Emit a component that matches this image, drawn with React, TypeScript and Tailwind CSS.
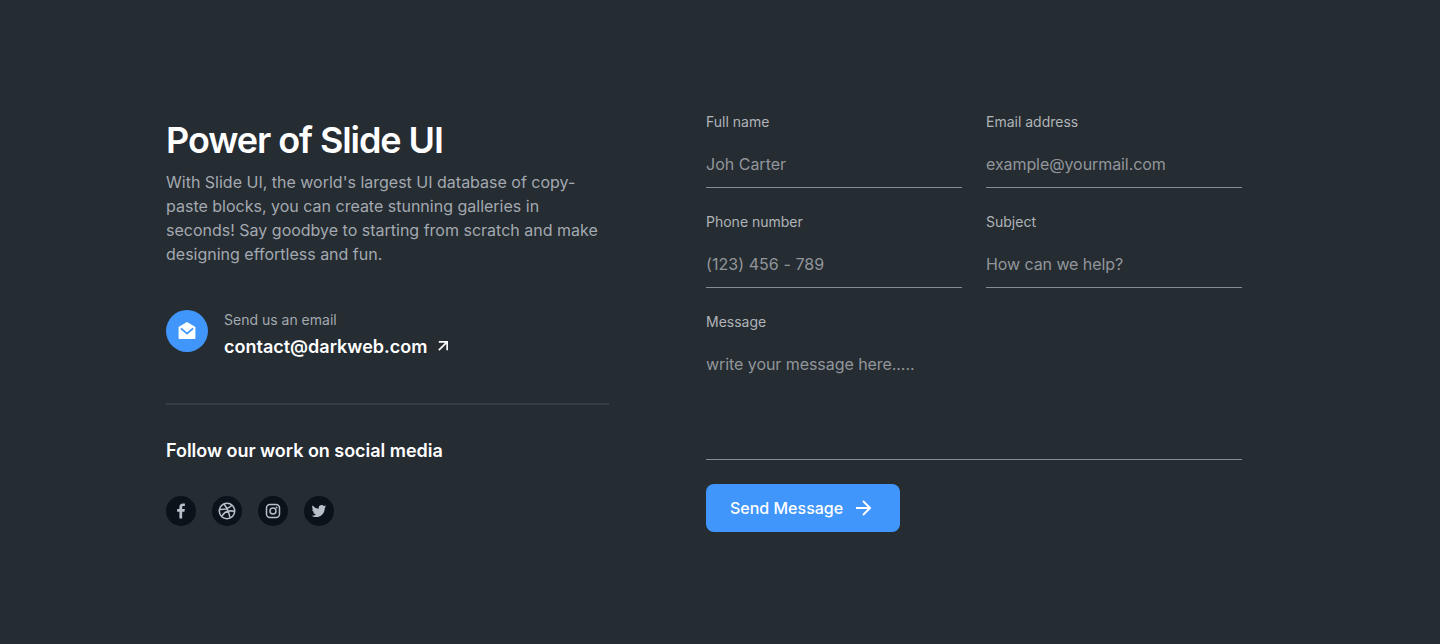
import React from "react";
import { BiLogoFacebook, BiLogoTwitter } from "react-icons/bi";
import { FiArrowRight, FiArrowUpRight } from "react-icons/fi";

const inputClass =
  "block w-full border-b border-[#868c93] bg-transparent text-base leading-6 text-white placeholder:text-[#92969b] outline-none rounded-none p-0";

function Field({ label, placeholder, tracking = "tracking-[-0.08px]" }: { label: string; placeholder: string; tracking?: string }) {
  return (
    <label className="block">
      <span className="block text-sm leading-5 text-[#b0b4b8]">{label}</span>
      <input className={`${inputClass} ${tracking} mt-2 h-12`} placeholder={placeholder} />
    </label>
  );
}

function Envelope() {
  return (
    <svg viewBox="0 0 18 18" className="size-[18px]">
      <path d="M9 0 L16.7 4.4 Q17.4 4.8 17.4 5.6 V16 Q17.4 17 16.4 17 H1.6 Q.6 17 .6 16 V5.6 Q.6 4.8 1.3 4.4Z" fill="currentColor" />
      <path d="M2.9 6.4 L9 11.600 L15.1 6.400" fill="none" stroke="#4096fb" strokeWidth="1.9" />
    </svg>
  );
}

function Dribbble() {
  return (
    <svg viewBox="0 0 18 18" className="size-[18px]" fill="none" stroke="currentColor" strokeWidth="1.6">
      <circle cx="9" cy="9" r="7.7" />
      <path d="M5.9 2c2.8 3.4 5 7.600 6.1 13.600M1.400 7.500c5 .2 9.700-.9 12.500-4.200M3.700 14.500C6.200 9.500 10.500 7.900 16.600 9.300" />
    </svg>
  );
}

function Instagram() {
  return (
    <svg viewBox="0 0 16 16" className="size-4" fill="none" stroke="currentColor" strokeWidth="1.5">
      <rect x="1.500" y="1.500" width="13" height="13" rx="3.400" />
      <circle cx="8" cy="8" r="3" />
      <circle cx="11.600" cy="4.400" r=".9" fill="currentColor" stroke="none" />
    </svg>
  );
}

const socials = [
  <BiLogoFacebook key="facebook" size={20} />,
  <Dribbble key="dribbble" />,
  <Instagram key="instagram" />,
  <BiLogoTwitter key="twitter" size={18} />,
];

export default function App() {
  return (
    <section className="flex h-[644px] w-full bg-[#252c32] pt-28 pl-[166px] font-['Inter',sans-serif]">
      <div className="w-[444px]">
        <h1 className="mt-1 text-4xl leading-[48px] font-semibold tracking-[-0.03em] text-white">Power of Slide UI</h1>
        <p className="mt-1.5 text-base leading-6 text-[#a3a9b0]">
          With Slide UI, the world's largest UI database of copy-<br />
          paste blocks, you can create stunning galleries in<br />
          seconds! Say goodbye to starting from scratch and make<br />
          designing effortless and fun.
        </p>
        <div className="mt-11 flex gap-4">
          <span className="flex size-[42px] items-center justify-center rounded-full bg-[#4096fb] text-white">
            <Envelope />
          </span>
          <div>
            <p className="text-sm leading-5 text-[#a3a9b0]">Send us an email</p>
            <a className="mt-[3px] flex items-center text-lg leading-7 font-semibold text-white">
              contact@darkweb.com <FiArrowUpRight className="mb-0.5 ml-1.5 [stroke-linecap:butt] [stroke-linejoin:miter]" size={20} strokeWidth={2} />
            </a>
          </div>
        </div>
        <hr className="mt-[42px] w-[443px] border-t-2 border-[#363d43]" />
        <h2 className="mt-8 text-lg leading-7 font-semibold tracking-[-0.03px] text-white">Follow our work on social media</h2>
        <div className="mt-[31px] flex gap-4">
          {socials.map((icon, i) => (
            <span key={i} className="flex size-[30px] items-center justify-center rounded-full bg-[#0b121a] text-[#b8bfc8]">
              {icon}
            </span>
          ))}
        </div>
      </div>
      <form className="ml-24 w-[536px]">
        <div className="grid grid-cols-2 gap-6">
          <Field label="Full name" placeholder="Joh Carter" tracking="tracking-normal" />
          <Field label="Email address" placeholder="example@yourmail.com" />
          <Field label="Phone number" placeholder="(123) 456 - 789" tracking="tracking-[0.06px]" />
          <Field label="Subject" placeholder="How can we help?" />
        </div>
        <label className="mt-6 block">
          <span className="block text-sm leading-5 text-[#b0b4b8]">Message</span>
          <textarea className={`${inputClass} mt-2 h-[120px] resize-none pt-3 tracking-[-0.06px]`} placeholder="write your message here....." />
        </label>
        <button type="button" className="mt-6 flex h-12 w-[194px] items-center rounded-lg bg-[#4096fb] pl-6 text-base font-medium text-white">
          Send Message <FiArrowRight className="ml-2 [stroke-linecap:butt] [stroke-linejoin:miter]" size={24} />
        </button>
      </form>
    </section>
  );
}
